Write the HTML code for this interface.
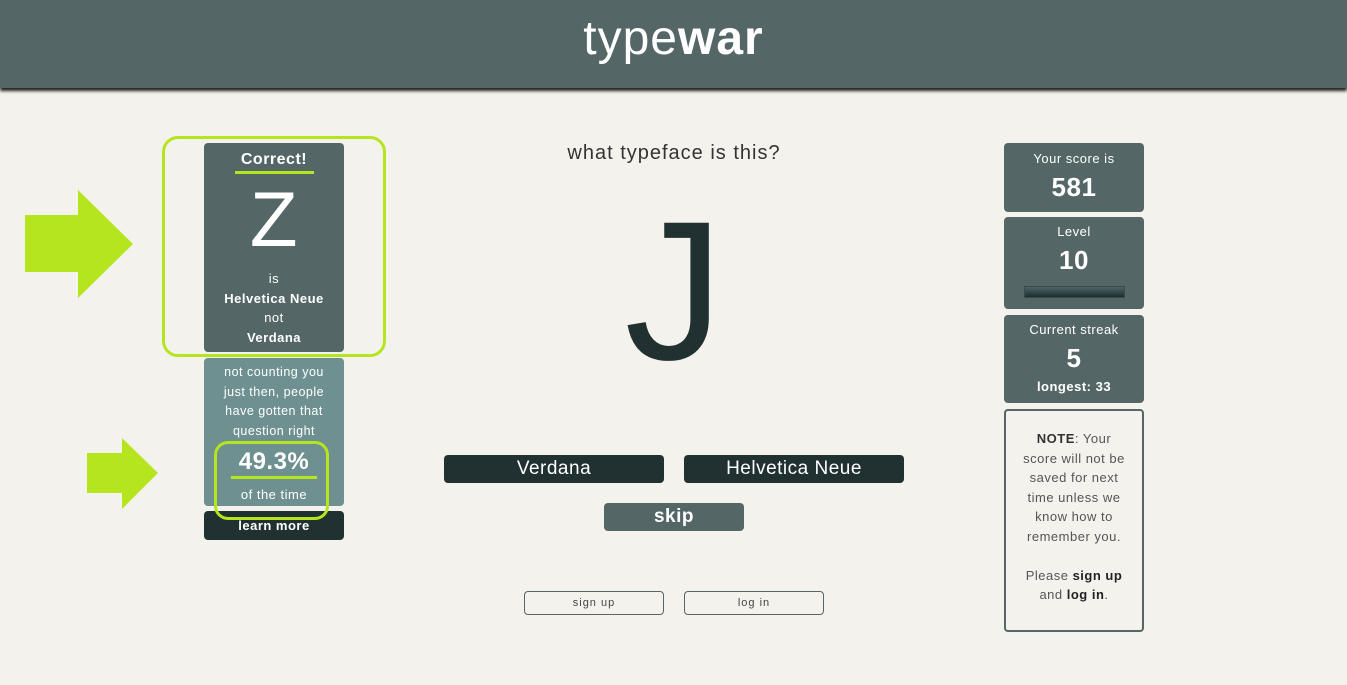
<!DOCTYPE html>
<html><head><meta charset="utf-8"><style>
*{margin:0;padding:0;box-sizing:border-box}
body{width:1347px;height:685px;background:#f3f2ed;font-family:"Liberation Sans",sans-serif;position:relative;overflow:hidden;letter-spacing:.5px}
.hdr{position:absolute;left:0;top:0;width:1347px;height:88px;background:#546766;box-shadow:0 3px 3px #222;text-align:center;color:#fff;font-size:48px;line-height:78px;letter-spacing:1px}
.a{position:absolute}
.box{position:absolute;background:#546766;border-radius:4px;color:#fff;text-align:center}
.btn{position:absolute;border-radius:4px;color:#fff;text-align:center;background:#213031}
.out{position:absolute;border:1.5px solid #546766;border-radius:4px;text-align:center;color:#444;font-size:11px;line-height:23px;letter-spacing:1px}
</style></head><body>
<div class="hdr">type<b>war</b></div>

<svg class="a" style="left:25px;top:190px" width="110" height="110"><polygon points="0,25 53,25 53,0 108,54 53,108 53,82 0,82" fill="#b5e51f"/></svg>
<svg class="a" style="left:87px;top:438px" width="75" height="75"><polygon points="0,15 35,15 35,0 71,35 35,71 35,55 0,55" fill="#b5e51f"/></svg>

<div class="box" style="left:204px;top:143px;width:140px;height:209px">
 <div style="font-size:16px;font-weight:bold;margin-top:8px;line-height:18px">Correct!</div>
 <div style="width:79px;height:3px;background:#b5e51f;margin:2px auto 0"></div>
 <div style="font-size:78px;line-height:70px;margin-top:10px;font-weight:300">Z</div>
 <div style="font-size:13px;line-height:19.5px;margin-top:15px">is<br><b>Helvetica Neue</b><br>not<br><b>Verdana</b></div>
</div>
<div class="a" style="left:162px;top:136px;width:224px;height:221px;border:3px solid #b5e51f;border-radius:16px"></div>

<div class="box" style="left:204px;top:358px;width:140px;height:148px;background:#6e9090">
 <div style="font-size:12.5px;line-height:19.5px;margin-top:5px">not counting you<br>just then, people<br>have gotten that<br>question right</div>
 <div style="font-size:24px;font-weight:bold;line-height:26px;margin-top:8px">49.3%</div>
 <div style="width:86px;height:3px;background:#b5e51f;margin:1px auto 0"></div>
 <div style="font-size:13px;margin-top:8px">of the time</div>
</div>
<div class="btn" style="left:204px;top:511px;width:140px;height:29px;font-size:13px;font-weight:bold;line-height:30px">learn more</div>
<div class="a" style="left:214px;top:441px;width:115px;height:79px;border:3px solid #b5e51f;border-radius:14px"></div>

<div class="a" style="left:444px;top:142px;width:460px;text-align:center;font-size:20px;color:#333;letter-spacing:1px">what typeface is this?</div>
<div class="a" style="left:444px;top:192px;width:460px;text-align:center;font-size:198px;line-height:198px;color:#213031;font-weight:300;letter-spacing:0">J</div>

<div class="btn" style="left:444px;top:455px;width:220px;height:28px;font-size:19px;line-height:28px">Verdana</div>
<div class="btn" style="left:684px;top:455px;width:220px;height:28px;font-size:19px;line-height:28px">Helvetica Neue</div>
<div class="btn" style="left:604px;top:503px;width:140px;height:28px;font-size:19px;line-height:28px;background:#546766;font-weight:bold">skip</div>
<div class="out" style="left:524px;top:591px;width:140px;height:24px">sign up</div>
<div class="out" style="left:684px;top:591px;width:140px;height:24px">log in</div>

<div class="box" style="left:1004px;top:143px;width:140px;height:69px">
 <div style="font-size:13px;margin-top:8px">Your score is</div>
 <div style="font-size:26px;font-weight:bold;margin-top:6px">581</div>
</div>
<div class="box" style="left:1004px;top:217px;width:140px;height:92px">
 <div style="font-size:13px;margin-top:7px">Level</div>
 <div style="font-size:26px;font-weight:bold;margin-top:6px">10</div>
 <div style="width:101px;height:12px;margin:10px auto 0;background:linear-gradient(#4d6466,#1e2d2e);border:1px solid #3b4a4a"></div>
</div>
<div class="box" style="left:1004px;top:315px;width:140px;height:88px">
 <div style="font-size:13px;margin-top:7px">Current streak</div>
 <div style="font-size:26px;font-weight:bold;margin-top:6px">5</div>
 <div style="font-size:13px;font-weight:bold;margin-top:5px">longest: 33</div>
</div>
<div class="a" style="left:1004px;top:409px;width:140px;height:223px;border:2px solid #546766;border-radius:4px;text-align:center;color:#555;font-size:13px;line-height:19.5px;padding-top:18px">
<b style="color:#333">NOTE</b>: Your<br>score will not be<br>saved for next<br>time unless we<br>know how to<br>remember you.<br><br>Please <b style="color:#222">sign up</b><br>and <b style="color:#222">log in</b>.
</div>
</body></html>
